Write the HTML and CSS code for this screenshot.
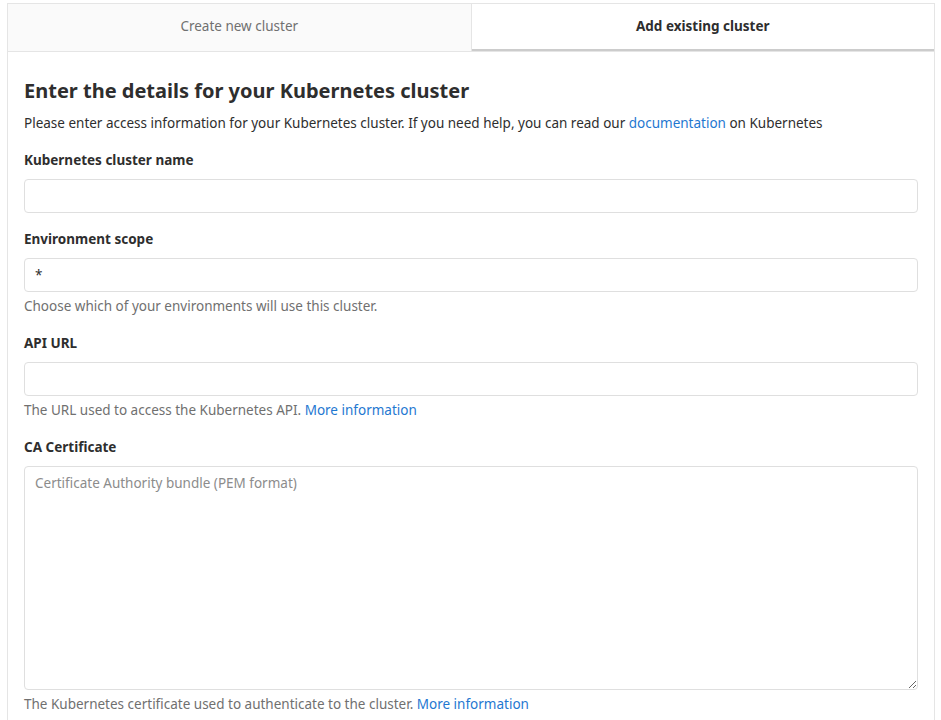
FILE: index.html
```html
<!DOCTYPE html>
<html lang="en">
<head>
<meta charset="utf-8">
<title>Add existing cluster</title>
<link rel="stylesheet" href="styles.css">
</head>
<body>
<div class="panel">
  <div class="tabs">
    <div class="tab">Create new cluster</div>
    <div class="tab active">Add existing cluster</div>
  </div>
  <div class="content">
    <h2 class="title">Enter the details for your Kubernetes cluster</h2>
    <p class="intro">Please enter access information for your Kubernetes cluster. If you need help, you can read our <a href="#">documentation</a> on Kubernetes</p>
    <div class="field">
      <label class="label">Kubernetes cluster name</label>
      <input class="input" type="text">
    </div>
    <div class="field">
      <label class="label">Environment scope</label>
      <input class="input" type="text" value="*">
      <p class="help">Choose which of your environments will use this cluster.</p>
    </div>
    <div class="field">
      <label class="label">API URL</label>
      <input class="input" type="text">
      <p class="help">The URL used to access the Kubernetes API. <a href="#">More information</a></p>
    </div>
    <div class="field">
      <label class="label">CA Certificate</label>
      <textarea class="input textarea" placeholder="Certificate Authority bundle (PEM format)"></textarea>
      <p class="help">The Kubernetes certificate used to authenticate to the cluster. <a href="#">More information</a></p>
    </div>
  </div>
</div>
</body>
</html>
```
FILE: styles.css
```css
* { box-sizing: border-box; }
html, body { margin: 0; background: #fff; }
body {
  padding: 3px 6px 0 7px;
  font-family: "Noto Sans", "Open Sans", sans-serif;
  font-size: 13.5px;
  color: #2e2e2e;
}
.panel {
  border: 1px solid #e5e5e5;
  border-bottom: none;
  min-height: 800px;
}
.tabs {
  display: flex;
  border-bottom: 1px solid #e5e5e5;
}
.tab {
  flex: 1;
  height: 47px;
  display: flex;
  align-items: center;
  justify-content: center;
  padding-bottom: 4px;
  background: #fafafa;
  color: #707070;
  border-right: 1px solid #e5e5e5;
}
.tab.active {
  background: #fff;
  color: #2e2e2e;
  font-weight: 700;
  border-right: none;
  border-bottom: 2px solid #ccc;
  padding-bottom: 2px;
}
.content {
  padding: 24px 16px 0 16px;
}
.title {
  margin: 0;
  font-size: 20px;
  font-weight: 700;
  line-height: 30px;
}
.intro {
  margin: 7px 0 0;
  padding-bottom: 1px;
  line-height: 20px;
}
a { color: #1f78d1; text-decoration: none; }
.field { margin-top: 16px; }
.label {
  display: block;
  font-weight: 700;
  line-height: 20px;
  margin-bottom: 9px;
}
.input {
  display: block;
  width: 100%;
  height: 34px;
  border: 1px solid #dfdfdf;
  border-radius: 4px;
  padding: 6px 10px;
  font-family: inherit;
  font-size: 13.5px;
  color: #2e2e2e;
  background: #fff;
}
.textarea {
  height: 224px;
  resize: vertical;
  line-height: 20px;
  padding: 6px 10px;
}
.textarea::placeholder { color: #8c8c8c; }
.help {
  margin: 4px 0 0;
  padding-bottom: 1px;
  color: #707070;
  line-height: 20px;
}
```
